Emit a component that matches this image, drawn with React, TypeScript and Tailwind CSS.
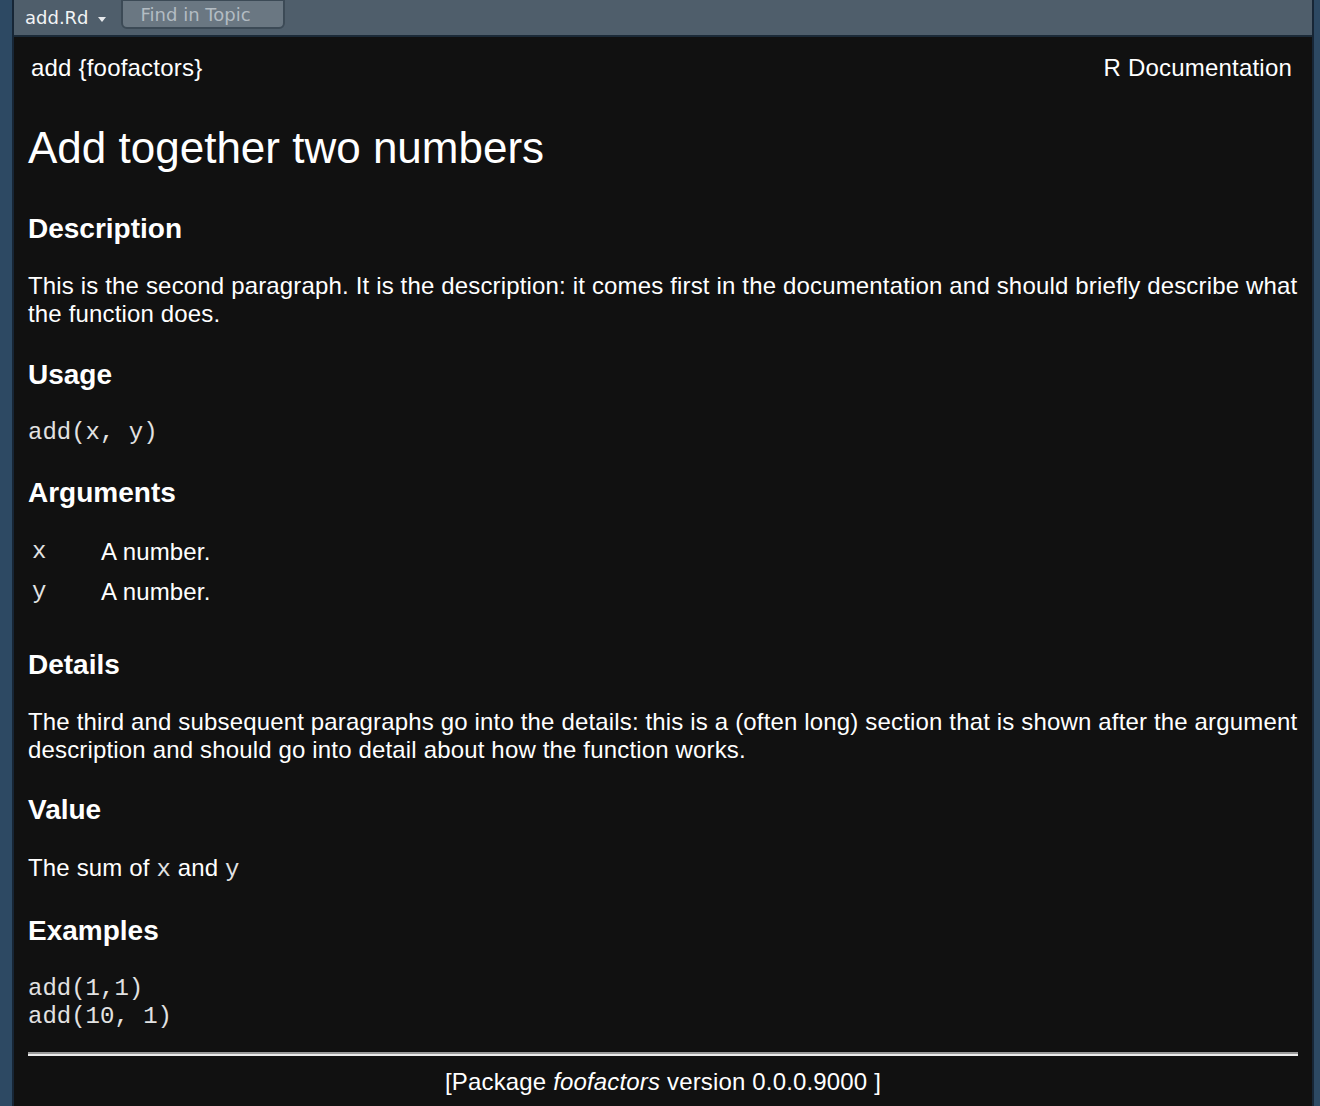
// R help pane: add {foofactors}

const sans = "font-['Liberation_Sans',Arial,sans-serif]";
const mono = "font-['Liberation_Mono','Courier_New',monospace]";
const ui = "font-['DejaVu_Sans','Liberation_Sans',sans-serif]";

function Heading({ children, className = '' }: { children: string; className?: string }) {
  return (
    <h3 className={`text-[28px] leading-[32px] font-bold text-white ${className}`}>{children}</h3>
  );
}

function Code({ children }: { children: string }) {
  return <span className={`${mono} tracking-normal text-[#e2e2e2]`}>{children}</span>;
}

export default function App() {
  return (
    <div className={`flex h-[1106px] w-[1320px] overflow-hidden bg-[#2d4963] ${sans}`}>
      {/* left pane edge */}
      <div className="w-[12px] shrink-0 bg-[#2d4963]" />

      <div className="flex w-[1302px] shrink-0 flex-col border-x-2 border-[#172636] bg-[#111111]">
        {/* Toolbar */}
        <div className={`flex h-[37px] shrink-0 items-start border-b-2 border-[#1b2a38] bg-[#4f5e6b] ${ui}`}>
          <div className="flex h-[35px] items-center pl-[11px] text-[18px] text-[#f2f4f5]">
            <span>add.Rd</span>
            <svg className="ml-[9px] mt-[3px]" width="8" height="5" viewBox="0 0 8 5">
              <path d="M0 0 L8 0 L4 5 Z" fill="#e6e9ec" />
            </svg>
          </div>
          <div className="ml-[15px] mt-[-1px] flex h-[30px] w-[164px] items-center rounded-b-[6px] border-2 border-[#3c4a56] bg-[#6a7782] pl-[18px] pt-[1px] text-[18px] text-[#b3bcc3]">
            Find in Topic
          </div>
        </div>

        {/* Document */}
        <div className="flex flex-col pl-[14px] pr-[14px] text-[24px] leading-[28px] text-white">
          <div className="mt-[17px] flex justify-between pl-[3px] pr-[6px] tracking-[0.2px]">
            <span>add {'{'}foofactors{'}'}</span>
            <span>R Documentation</span>
          </div>

          <h2 className="mt-[40px] text-[44px] leading-[52px] font-normal">Add together two numbers</h2>

          <Heading className="mt-[39px]">Description</Heading>
          <p className="mt-[27px] whitespace-nowrap tracking-[0.16px]">
            This is the second paragraph. It is the description: it comes first in the documentation and should briefly describe what
            <br />
            the function does.
          </p>

          <Heading className="mt-[31px]">Usage</Heading>
          <pre className={`mt-[28px] ${mono} text-[24px] leading-[28px] text-[#e2e2e2]`}>add(x, y)</pre>

          <Heading className="mt-[30px]">Arguments</Heading>
          <div className="mt-[29px] flex flex-col gap-[12px]">
            <div className="flex">
              <span className={`w-[73px] pl-[4px] ${mono} text-[#e2e2e2]`}>x</span>
              <span className="tracking-[0.16px]">A number.</span>
            </div>
            <div className="flex">
              <span className={`w-[73px] pl-[4px] ${mono} text-[#e2e2e2]`}>y</span>
              <span className="tracking-[0.16px]">A number.</span>
            </div>
          </div>

          <Heading className="mt-[43px]">Details</Heading>
          <p className="mt-[27px] whitespace-nowrap tracking-[0.16px]">
            The third and subsequent paragraphs go into the details: this is a (often long) section that is shown after the argument
            <br />
            description and should go into detail about how the function works.
          </p>

          <Heading className="mt-[30px]">Value</Heading>
          <p className="mt-[28px] tracking-[0.16px]">
            The sum of <Code>x</Code> and <Code>y</Code>
          </p>

          <Heading className="mt-[31px]">Examples</Heading>
          <pre className={`mt-[28px] ${mono} text-[24px] leading-[28px] text-[#e2e2e2]`}>
            {'add(1,1)\nadd(10, 1)'}
          </pre>

          <div className="mt-[21px] h-[4px] w-[1270px] border-t-2 border-[#9a9a9a] bg-[#ececec]" />

          <div className="mt-[12px] text-center tracking-[0.16px]">
            [Package <em>foofactors</em> version 0.0.0.9000 ]
          </div>
        </div>
      </div>

      <div className="w-[4px] shrink-0 bg-[#2d4963]" />
    </div>
  );
}
